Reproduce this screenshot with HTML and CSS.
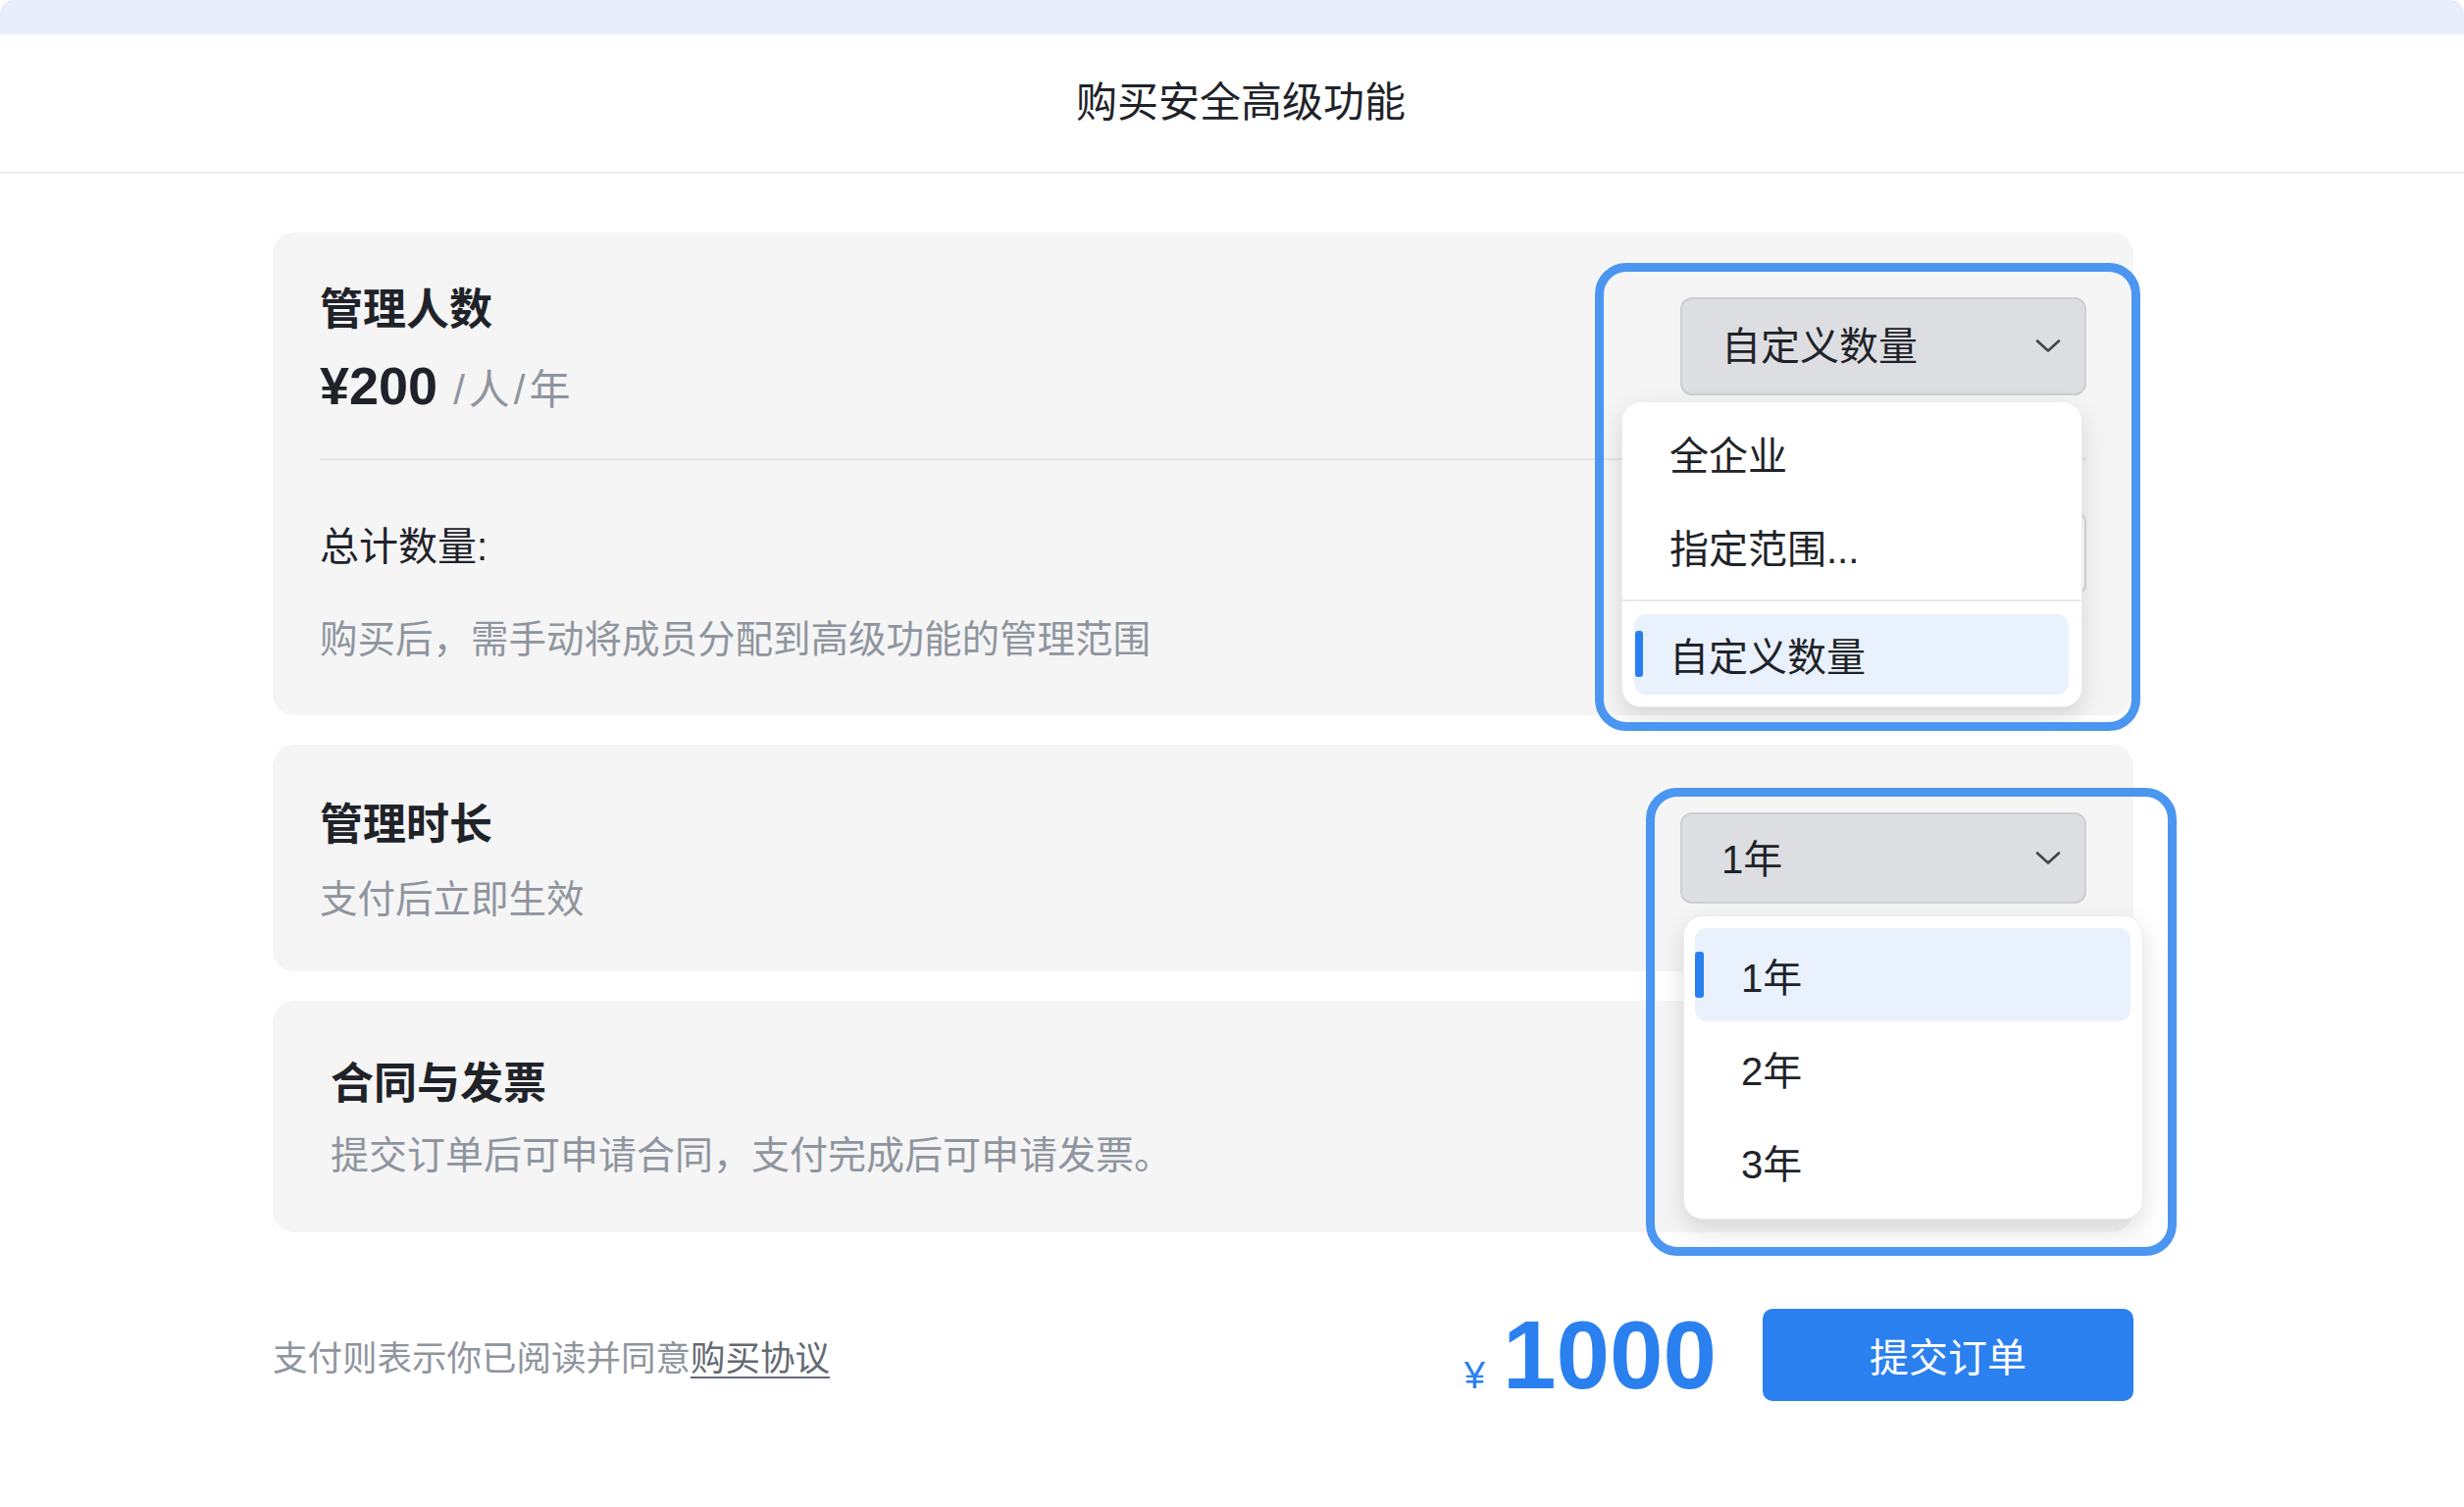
FILE: index.html
```html
<!DOCTYPE html>
<html lang="zh-CN">
<head>
<meta charset="utf-8">
<title>购买安全高级功能</title>
<link rel="stylesheet" href="styles.css">
</head>
<body>
<div class="topbar"></div>
<header class="titlebar">购买安全高级功能</header>

<main class="content">
  <!-- seats -->
  <section class="card card-seats">
    <div class="seats-head">
      <div class="info">
        <h2 class="card-title">管理人数</h2>
        <div class="unit-price"><span class="amount">¥200</span><span class="per">/人/年</span></div>
      </div>
      <div class="select-wrap">
        <div class="select select-seats">
          <span>自定义数量</span>
          <svg class="chevron" width="26" height="15" viewBox="0 0 26 15"><path d="M2 2.5 L13 12.5 L24 2.5" fill="none" stroke="#404347" stroke-width="2.6" stroke-linecap="round" stroke-linejoin="round"/></svg>
        </div>
        <ul class="menu menu-seats">
          <li class="option">全企业</li>
          <li class="option">指定范围...</li>
          <li class="menu-sep"></li>
          <li class="option selected">自定义数量</li>
        </ul>
      </div>
    </div>
    <div class="seats-body">
      <div class="info">
        <div class="total-label">总计数量:</div>
        <p class="card-desc desc-seats">购买后，需手动将成员分配到高级功能的管理范围</p>
      </div>
      <div class="count-input"></div>
    </div>
    <div class="focus-ring ring-seats"></div>
  </section>

  <!-- term -->
  <section class="card card-term">
    <div class="info">
      <h2 class="card-title">管理时长</h2>
      <p class="card-desc">支付后立即生效</p>
    </div>
    <div class="select-wrap">
      <div class="select select-term">
        <span>1年</span>
        <svg class="chevron" width="26" height="15" viewBox="0 0 26 15"><path d="M2 2.5 L13 12.5 L24 2.5" fill="none" stroke="#404347" stroke-width="2.6" stroke-linecap="round" stroke-linejoin="round"/></svg>
      </div>
      <ul class="menu menu-term">
        <li class="option selected">1年</li>
        <li class="option">2年</li>
        <li class="option">3年</li>
      </ul>
    </div>
    <div class="focus-ring ring-term"></div>
  </section>

  <!-- contract -->
  <section class="card card-contract">
    <div class="info">
      <h2 class="card-title">合同与发票</h2>
      <p class="card-desc desc-contract">提交订单后可申请合同，支付完成后可申请发票。</p>
    </div>
  </section>
</main>

<footer class="footer">
  <div class="agreement">支付则表示你已阅读并同意<a href="#">购买协议</a></div>
  <div class="checkout">
    <div class="total">
      <div class="total-row"><span class="currency">¥</span><span class="sum">1000</span></div>
      <div class="total-dash"></div>
    </div>
    <button class="submit">提交订单</button>
  </div>
</footer>
</body>
</html>
```

FILE: styles.css
```css
html, body {
  margin: 0;
  padding: 0;
  background: #ffffff;
}

body {
  font-family: "Liberation Sans", "Noto Sans CJK SC", sans-serif;
  color: #1f2329;
}

.topbar {
  height: 35px;
  background: #e8eef9;
  border-radius: 14px 14px 0 0;
}

.titlebar {
  height: 140px;
  line-height: 140px;
  text-align: center;
  font-size: 42px;
  padding-left: 18px;
  border-bottom: 2px solid #ececec;
}

.content {
  width: 1897px;
  margin: 60px 0 0 278px;
  display: flex;
  flex-direction: column;
  gap: 30px;
}

.card {
  position: relative;
  background: #f5f5f6;
  border-radius: 22px;
  padding: 0 48px;
}

.card-title {
  margin: 0;
  font-size: 44px;
  line-height: 62px;
  font-weight: 700;
  color: #1f2329;
}

.card-desc {
  margin: 17px 0 0;
  font-size: 38.5px;
  line-height: 56px;
  color: #8f959e;
}

/* seats card */
.seats-head {
  display: flex;
  justify-content: space-between;
  align-items: flex-start;
  padding: 48px 0 28px;
}

.unit-price {
  height: 92px;
  line-height: 92px;
  font-size: 54px;
  white-space: nowrap;
}

.amount {
  font-weight: 700;
  color: #1f2329;
}

.per {
  font-size: 42px;
  color: #8f959e;
  margin-left: 16px;
  letter-spacing: 4px;
}

.seats-body {
  display: flex;
  justify-content: space-between;
  align-items: flex-start;
  border-top: 2px solid #e4e5e7;
  padding: 58px 0 49px;
}

.total-label {
  font-size: 40px;
  line-height: 60px;
}

.desc-seats {
  margin-top: 37px;
}

.count-input {
  width: 420px;
  height: 84px;
  margin-top: -5px;
  box-sizing: border-box;
  background: #ffffff;
  border: 2px solid #d5d7da;
  border-radius: 10px;
}

/* select + dropdown */
.select-wrap {
  position: relative;
  width: 414px;
}

.card-seats .select-wrap {
  margin-top: 18px;
}

.select {
  box-sizing: border-box;
  height: 100px;
  display: flex;
  align-items: center;
  justify-content: space-between;
  padding: 0 24px 6px 40px;
  background: #dddee1;
  border: 2px solid #cdced1;
  border-radius: 12px;
  font-size: 40px;
  color: #1f2329;
}

.select .chevron {
  margin-top: 4px;
}

.select-term {
  height: 93px;
  padding-bottom: 4px;
}

.chevron {
  display: block;
}

.menu {
  position: absolute;
  z-index: 10;
  margin: 0;
  list-style: none;
  box-sizing: border-box;
  background: #ffffff;
  border: 1px solid #ececec;
  border-radius: 20px;
  box-shadow: 0 10px 26px rgba(0, 0, 0, 0.13);
}

.option {
  position: relative;
  height: 95px;
  display: flex;
  align-items: center;
  font-size: 40px;
  color: #1f2329;
}

.option.selected {
  background: #e9f1fc;
  border-radius: 12px;
}

.option.selected::before {
  content: "";
  position: absolute;
  left: 0;
  width: 8px;
  height: 47px;
  background: #2a7ff0;
  border-radius: 3px;
}

.menu-seats {
  left: -60px;
  top: 106px;
  width: 470px;
  padding: 4px 0 12px;
}

.menu-seats .option {
  padding-left: 48px;
}

.menu-seats .option.selected {
  height: 82px;
  margin: 0 13px 0 12px;
  padding-left: 36px;
}

.menu-seats .option.selected::before {
  top: 17px;
  left: 1px;
}

.menu-sep {
  height: 2px;
  margin: 7px 0 13px;
  background: #ebebeb;
}

.menu-term {
  left: 3px;
  top: 105px;
  width: 469px;
  padding: 12px 12px 11px 11px;
}

.menu-term .option {
  padding-left: 47px;
}

.menu-term .option.selected::before {
  top: 24px;
  width: 9px;
}

/* annotation rings */
.focus-ring {
  position: absolute;
  z-index: 20;
  box-sizing: border-box;
  border: 9px solid #4b96f0;
  border-radius: 32px;
  pointer-events: none;
}

.ring-seats {
  left: 1348px;
  top: 31px;
  width: 556px;
  height: 477px;
}

.ring-term {
  left: 1400px;
  top: 44px;
  width: 541px;
  height: 477px;
}

/* term card */
.card-term {
  display: flex;
  align-items: center;
  justify-content: space-between;
  height: 231px;
  box-sizing: border-box;
}

.card-term .info {
  padding-top: 6px;
}

/* contract card */
.card-contract {
  display: flex;
  align-items: center;
  height: 236px;
  box-sizing: border-box;
  padding-left: 59px;
}

.card-contract .info {
  padding-top: 4px;
}

.desc-contract {
  margin-top: 14px;
  font-size: 39px;
}

/* footer */
.footer {
  width: 1897px;
  height: 94px;
  margin: 78px 0 0 278px;
  display: flex;
  align-items: center;
  justify-content: space-between;
}

.agreement {
  font-size: 35.5px;
  color: #8f959e;
}

.agreement a {
  color: #646a73;
  text-decoration: underline;
  text-underline-offset: 6px;
  text-decoration-thickness: 2px;
}

.checkout {
  display: flex;
  align-items: center;
  gap: 47px;
}

.total {
  display: flex;
  flex-direction: column;
  margin-top: 4px;
  color: #2b80f0;
}

.total-row {
  display: flex;
  align-items: baseline;
  height: 96px;
}

/* dashed rule under the amount */
.total-dash {
  height: 4px;
  margin-top: 0;
  background-image: repeating-linear-gradient(90deg, #2b80f0 0px, #2b80f0 9px, transparent 9px, transparent 14px);
}

.currency {
  font-size: 38px;
  line-height: 38px;
  margin-right: 18px;
}

.sum {
  font-size: 98px;
  line-height: 96px;
  font-weight: 700;
}

.submit {
  width: 378px;
  height: 94px;
  border: none;
  border-radius: 10px;
  background: #2b80f0;
  color: #ffffff;
  font-family: "Liberation Sans", "Noto Sans CJK SC", sans-serif;
  font-size: 40px;
  cursor: pointer;
}
```
